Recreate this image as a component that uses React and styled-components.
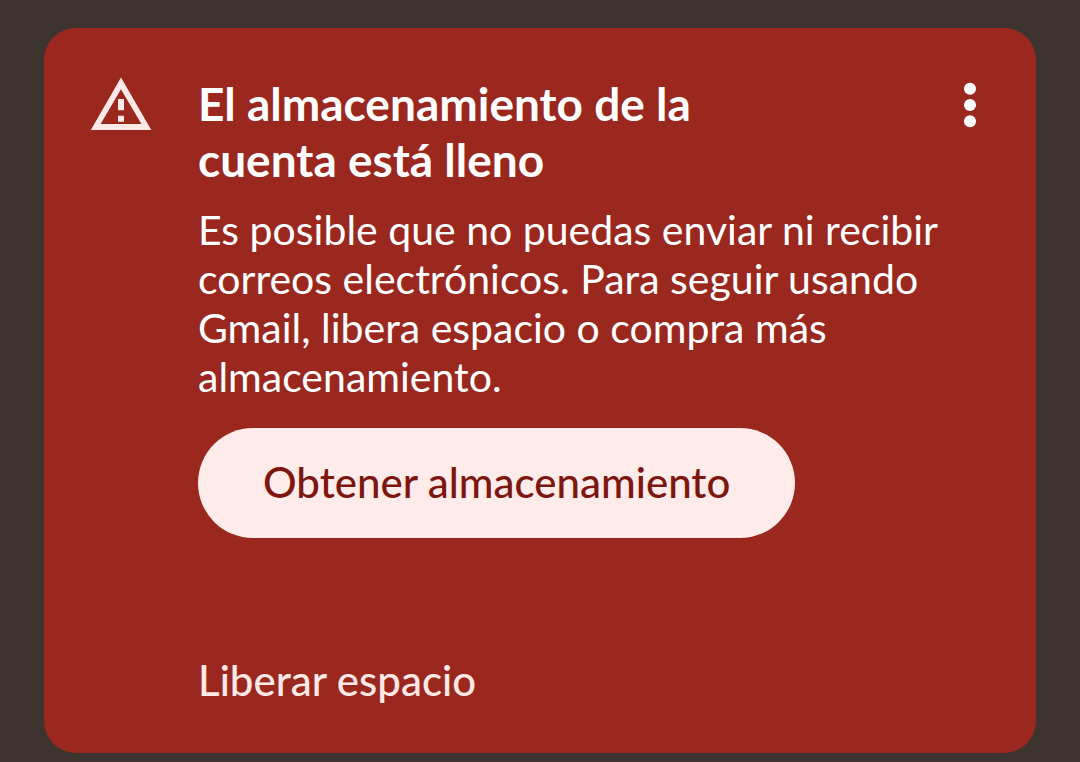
import React from 'react';
import styled, { createGlobalStyle } from 'styled-components';

const colors = {
  page: '#3d332f',
  card: '#9b281f',
  title: '#ffffff',
  soft: '#ffe9e6',
  button: '#ffebe9',
  buttonText: '#7c160f',
};

const GlobalStyle = createGlobalStyle`
  * {
    box-sizing: border-box;
  }

  body {
    margin: 0;
    background-color: ${colors.page};
    font-family: 'Lato', 'Open Sans', sans-serif;
  }
`;

const Page = styled.main`
  padding: 28px 44px 9px;
`;

const Card = styled.section`
  display: grid;
  grid-template-columns: 108px 1fr 44px;
  padding: 48px 44px 18px 46px;
  border-radius: 32px;
  background-color: ${colors.card};
`;

const WarningIcon = styled.svg`
  display: block;
  width: 62px;
  height: 56px;
`;

const Content = styled.div`
  display: flex;
  flex-direction: column;
  align-items: flex-start;
`;

const Title = styled.h1`
  max-width: 520px;
  margin: 0;
  color: ${colors.title};
  font-size: 46px;
  font-weight: 700;
  line-height: 56px;
`;

const Message = styled.p`
  margin: 17px 0 27px;
  color: ${colors.title};
  font-size: 41px;
  line-height: 49px;
`;

const Button = styled.button`
  height: 110px;
  border: 0;
  font-family: inherit;
  font-size: 42px;
  font-weight: 500;
  cursor: pointer;
`;

const FilledButton = styled(Button)`
  padding: 0 65px 2px;
  border-radius: 55px;
  background-color: ${colors.button};
  color: ${colors.buttonText};
`;

const TextButton = styled(Button)`
  margin-top: 87px;
  padding: 0;
  background: none;
  color: ${colors.soft};
`;

const MenuButton = styled.button`
  width: 44px;
  height: 56px;
  padding: 0;
  border: 0;
  background: none;
  cursor: pointer;
`;

const Warning = () => (
  <WarningIcon viewBox="0 0 62 56" aria-hidden="true">
    <path
      fill={colors.soft}
      fillRule="evenodd"
      d="M31 1.4 61.3 54H.8ZM31 13.2 10.6 48H51.4Z"
    />
    <path fill={colors.soft} d="M28 23h6v11.3h-6zM28 39.7h6v6h-6z" />
  </WarningIcon>
);

const Dots = () => (
  <svg width="44" height="56" viewBox="0 0 44 56" fill={colors.title} aria-hidden="true">
    <circle cx="22" cy="12.7" r="6" />
    <circle cx="22" cy="29" r="6" />
    <circle cx="22" cy="45.3" r="6" />
  </svg>
);

export default function App() {
  return (
    <Page>
      <GlobalStyle />
      <Card>
        <Warning />
        <Content>
          <Title>El almacenamiento de la cuenta está lleno</Title>
          <Message>
            Es posible que no puedas enviar ni recibir correos electrónicos. Para seguir usando
            Gmail, libera espacio o compra más almacenamiento.
          </Message>
          <FilledButton type="button">Obtener almacenamiento</FilledButton>
          <TextButton type="button">Liberar espacio</TextButton>
        </Content>
        <MenuButton type="button" aria-label="Más opciones">
          <Dots />
        </MenuButton>
      </Card>
    </Page>
  );
}
